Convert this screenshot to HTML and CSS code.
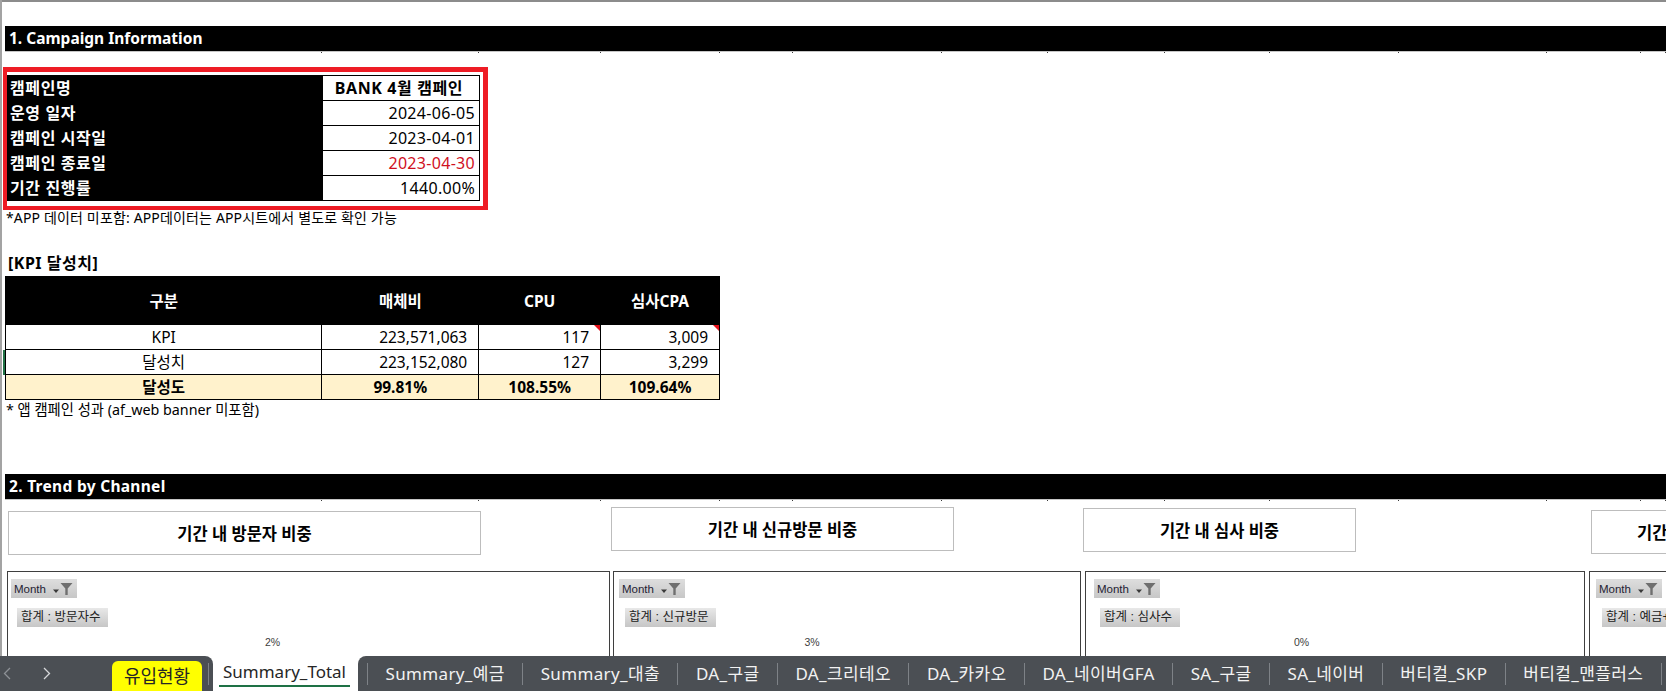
FILE: index.html
```html
<!DOCTYPE html>
<html lang="ko">
<head>
<meta charset="utf-8">
<title>Summary_Total</title>
<link rel="stylesheet" href="styles.css">
</head>
<body>
<div class="sheet">
  <div class="topline"></div>

  <div class="bar bar-first">1. Campaign Information</div>
  <div class="ticks"><span></span><span></span><span></span><span></span><span></span><span></span><span></span><span></span><span></span><span></span><span></span><span></span><span></span></div>

  <div class="info">
    <table class="info-table">
      <tr><td class="lbl">캠페인명</td><td class="val val-name">BANK 4월 캠페인</td></tr>
      <tr><td class="lbl">운영 일자</td><td class="val">2024-06-05</td></tr>
      <tr><td class="lbl">캠페인 시작일</td><td class="val">2023-04-01</td></tr>
      <tr><td class="lbl">캠페인 종료일</td><td class="val val-red">2023-04-30</td></tr>
      <tr><td class="lbl">기간 진행률</td><td class="val">1440.00%</td></tr>
    </table>
  </div>
  <p class="note note-app">*APP 데이터 미포함: APP데이터는 APP시트에서 별도로 확인 가능</p>

  <h3 class="kpi-title">[KPI 달성치]</h3>
  <table class="kpi">
    <tr class="kpi-head"><th class="k1">구분</th><th class="k2">매체비</th><th class="k3">CPU</th><th class="k4">심사CPA</th></tr>
    <tr><td class="kc">KPI</td><td class="kn">223,571,063</td><td class="kn cm">117</td><td class="kn cm">3,009</td></tr>
    <tr><td class="kc sel">달성치</td><td class="kn">223,152,080</td><td class="kn">127</td><td class="kn">3,299</td></tr>
    <tr class="kpi-total"><td>달성도</td><td>99.81%</td><td>108.55%</td><td>109.64%</td></tr>
  </table>
  <p class="note note-app2">* 앱 캠페인 성과 (af_web banner 미포함)</p>

  <div class="bar bar-second">2. Trend by Channel</div>
  <div class="ticks"><span></span><span></span><span></span><span></span><span></span><span></span><span></span><span></span><span></span><span></span><span></span><span></span><span></span></div>

  <div class="titles">
    <div class="tbox t1">기간 내 방문자 비중</div>
    <div class="tbox t2">기간 내 신규방문 비중</div>
    <div class="tbox t3">기간 내 심사 비중</div>
    <div class="tbox t4">기간 내 예금+대출 비중</div>
  </div>

  <div class="charts">
    <div class="chart c1">
      <div class="fbtn">Month <svg class="ficon" width="22" height="15" viewBox="0 0 22 15"><path d="M1 8.5h6l-3 3.5z" fill="#3a3a3a"/><path d="M8.5 2h12l-4.8 5.4v6.6h-2.4v-6.6z" fill="#6f6f6f"/></svg></div>
      <div class="sbtn">합계 : 방문자수</div>
      <p class="pct">2%</p>
    </div>
    <div class="chart c2">
      <div class="fbtn">Month <svg class="ficon" width="22" height="15" viewBox="0 0 22 15"><path d="M1 8.5h6l-3 3.5z" fill="#3a3a3a"/><path d="M8.5 2h12l-4.8 5.4v6.6h-2.4v-6.6z" fill="#6f6f6f"/></svg></div>
      <div class="sbtn">합계 : 신규방문</div>
      <p class="pct">3%</p>
    </div>
    <div class="chart c3">
      <div class="fbtn">Month <svg class="ficon" width="22" height="15" viewBox="0 0 22 15"><path d="M1 8.5h6l-3 3.5z" fill="#3a3a3a"/><path d="M8.5 2h12l-4.8 5.4v6.6h-2.4v-6.6z" fill="#6f6f6f"/></svg></div>
      <div class="sbtn">합계 : 심사수</div>
      <p class="pct">0%</p>
    </div>
    <div class="chart c4">
      <div class="fbtn">Month <svg class="ficon" width="22" height="15" viewBox="0 0 22 15"><path d="M1 8.5h6l-3 3.5z" fill="#3a3a3a"/><path d="M8.5 2h12l-4.8 5.4v6.6h-2.4v-6.6z" fill="#6f6f6f"/></svg></div>
      <div class="sbtn">합계 : 예금+대출</div>
    </div>
  </div>
</div>

<div class="tabbar">
  <div class="tb-left">
    <svg class="nav nav-prev" width="8" height="13" viewBox="0 0 8 13"><path d="M7 1L1.5 6.5L7 12" fill="none" stroke="#8d9196" stroke-width="1.3"/></svg>
    <svg class="nav nav-next" width="8" height="13" viewBox="0 0 8 13"><path d="M1 1L6.5 6.5L1 12" fill="none" stroke="#d6d8da" stroke-width="1.3"/></svg>
    <div class="tab-yellow">유입현황</div>
    <span class="sep"></span>
  </div>
  <div class="tab-active"><span>Summary_Total</span></div>
  <div class="tb-right">
    <div class="tab">Summary_예금</div>
    <div class="tab">Summary_대출</div>
    <div class="tab">DA_구글</div>
    <div class="tab">DA_크리테오</div>
    <div class="tab">DA_카카오</div>
    <div class="tab">DA_네이버GFA</div>
    <div class="tab">SA_구글</div>
    <div class="tab">SA_네이버</div>
    <div class="tab">버티컬_SKP</div>
    <div class="tab">버티컬_맨플러스</div>
    <div class="tab"></div>
  </div>
</div>
</body>
</html>
```

FILE: styles.css
```css
* { box-sizing: border-box; }

html, body { margin: 0; padding: 0; }

body {
  width: 1666px;
  height: 691px;
  overflow: hidden;
  display: flex;
  flex-direction: column;
  background: #fff;
  color: #000;
  font-family: "Noto Sans", "Noto Sans CJK KR", sans-serif;
}

.sheet {
  flex: 1;
  min-height: 0;
  overflow: hidden;
  border-left: 2px solid #a3a3a3;
  padding-left: 3px;
}

.topline {
  height: 2px;
  margin-left: -3px;
  background: #8c8c8c;
}

.bar {
  height: 25px;
  background: #000;
  color: #fff;
  font-weight: 700;
  font-size: 15.5px;
  line-height: 25px;
  padding-left: 4px;
  white-space: nowrap;
}
.bar-first { margin-top: 24px; }
.bar-second { margin-top: 56px; letter-spacing: 0.3px; }

.ticks {
  display: grid;
  grid-template-columns: 317px 157px 122px 119px 73px 149px 106px 117px 105px 129px 148px 94px 1fr;
  height: 2px;
  border-top: 1px solid #c6c6c6;
}
.ticks span { border-right: 1px solid #3a3a3a; }

/* campaign info */
.info {
  margin: 14px 0 0 -2px;
  width: 485px;
  border-style: solid;
  border-color: #ee1c25;
  border-width: 5px 5px 4px 4px;
  padding: 3px 3px 5px 0;
}

.info-table {
  width: 473px;
  border-collapse: collapse;
  font-size: 16px;
}
.info-table tr { height: 25px; }
.info-table td { padding: 0; line-height: 22px; white-space: nowrap; }

.lbl {
  width: 315px;
  background: #000;
  color: #fff;
  font-weight: 700;
  letter-spacing: 0.6px;
  padding-left: 2px !important;
  border: 1px solid #000;
}
.val {
  border: 1px solid #000;
  text-align: right;
  padding-right: 4px !important;
  letter-spacing: 0.3px;
}
.val-name { text-align: center; font-weight: 700; letter-spacing: 0.6px; }
.val-red { color: #d0101e; }

.note {
  margin: 0;
  font-size: 14px;
  line-height: 16px;
  padding-left: 1px;
  white-space: nowrap;
}
.note-app { letter-spacing: 0.15px; }
.note-app2 { margin-top: 2px; font-size: 14.3px; }

.kpi-title {
  margin: 27px 0 3px;
  font-size: 16px;
  line-height: 20px;
  font-weight: 700;
  letter-spacing: 0.5px;
  padding-left: 3px;
}

/* KPI table */
.kpi {
  width: 715px;
  border-collapse: collapse;
  font-size: 15.5px;
}
.kpi th {
  height: 48px;
  background: #000;
  color: #fff;
  font-weight: 700;
  padding: 0;
  text-align: center;
  border: 1px solid #000;
}
.k1 { width: 317px; }
.k2 { width: 157px; }
.k3 { width: 122px; }
.k4 { width: 119px; }
.kpi td {
  height: 25px;
  border: 1px solid #000;
  padding: 0;
  line-height: 22px;
}
.kc { text-align: center; }
.kn { text-align: right; padding-right: 11px !important; }
.sel { box-shadow: -3px 0 0 #217346; }
.cm { position: relative; }
.cm::after {
  content: "";
  position: absolute;
  top: 0;
  right: 0;
  border-top: 6px solid #e3101a;
  border-left: 6px solid transparent;
}
.kpi-total td {
  background: #fff2cc;
  font-weight: 700;
  text-align: center;
}

/* chart titles */
.titles {
  display: flex;
  align-items: flex-start;
  margin-top: 6px;
}
.tbox {
  flex: none;
  height: 44px;
  border: 1px solid #bdbdbd;
  display: flex;
  align-items: center;
  justify-content: center;
  font-size: 16.5px;
  font-weight: 700;
  white-space: nowrap;
  overflow: hidden;
}
.t1 { width: 473px; margin: 4px 0 0 3px; }
.t2 { width: 343px; margin: 0 0 0 130px; }
.t3 { width: 273px; margin: 1px 0 0 129px; }
.t4 { width: 246px; margin: 3px 0 0 235px; justify-content: flex-start; padding-left: 45px; }

/* chart boxes */
.charts {
  display: flex;
  margin-top: 16px;
}
.chart {
  flex: none;
  height: 140px;
  border: 1px solid #3f3f3f;
  padding: 7px 0 0 5px;
}
.c1 { width: 603px; margin-left: 2px; padding-left: 3px; }
.c2 { width: 468px; margin-left: 3px; padding-left: 5px; }
.c3 { width: 500px; margin-left: 4px; padding-left: 8px; }
.c4 { width: 300px; margin-left: 4px; padding-left: 6px; }

.fbtn {
  display: flex;
  align-items: center;
  width: max-content;
  height: 19px;
  padding: 0 3px 0 3px;
  background: linear-gradient(#dedede, #c7c7c7);
  font-family: "Liberation Sans", Arial, sans-serif;
  font-size: 11.5px;
  color: #1f2233;
  white-space: nowrap;
}
.ficon { margin-left: 6px; }

.sbtn {
  display: block;
  width: max-content;
  height: 19px;
  margin: 10px 0 0 6px;
  padding: 0 8px 0 4px;
  background: linear-gradient(#e8e8e8, #c6c6c6);
  font-family: "Liberation Sans", "Noto Sans CJK KR", sans-serif;
  font-size: 12.5px;
  line-height: 19px;
  color: #222;
  white-space: nowrap;
}

.pct {
  margin: 9px 0 0;
  padding-right: 75px;
  text-align: center;
  font-family: "Liberation Sans", Arial, sans-serif;
  font-size: 10.5px;
  color: #404040;
}

/* sheet tabs */
.tabbar {
  flex: none;
  height: 35px;
  display: flex;
  background: #fff;
  font-size: 17px;
}
.tb-left {
  flex: none;
  width: 213px;
  display: flex;
  align-items: center;
  background: #4b4f54;
  border-top-right-radius: 8px;
}
.nav-prev { margin-left: 3px; }
.nav-next { margin-left: 32px; }
.tab-yellow {
  align-self: flex-end;
  width: 90px;
  height: 30px;
  margin-left: 61px;
  background: #ffff00;
  border-radius: 6px 6px 0 0;
  color: #262626;
  font-size: 18px;
  line-height: 30px;
  text-align: center;
}
.sep {
  width: 1px;
  height: 22px;
  margin-left: 6px;
  background: #7e8287;
}

.tab-active {
  flex: none;
  width: 145px;
  display: flex;
  justify-content: center;
  background: #fff;
  color: #262626;
  padding-right: 2px;
}
.tab-active span {
  display: block;
  height: 31px;
  padding: 3px 4px 0;
  line-height: 25px;
  border-bottom: 2px solid #1e7145;
  white-space: nowrap;
}

.tb-right {
  flex: 1;
  display: flex;
  align-items: center;
  background: #4b4f54;
  border-top-left-radius: 8px;
  padding-left: 9px;
  overflow: hidden;
}
.tab {
  flex: none;
  height: 22px;
  line-height: 22px;
  padding: 0 17.5px;
  border-left: 1px solid #7e8287;
  color: #f2f2f2;
  letter-spacing: 0.35px;
  white-space: nowrap;
}
```
